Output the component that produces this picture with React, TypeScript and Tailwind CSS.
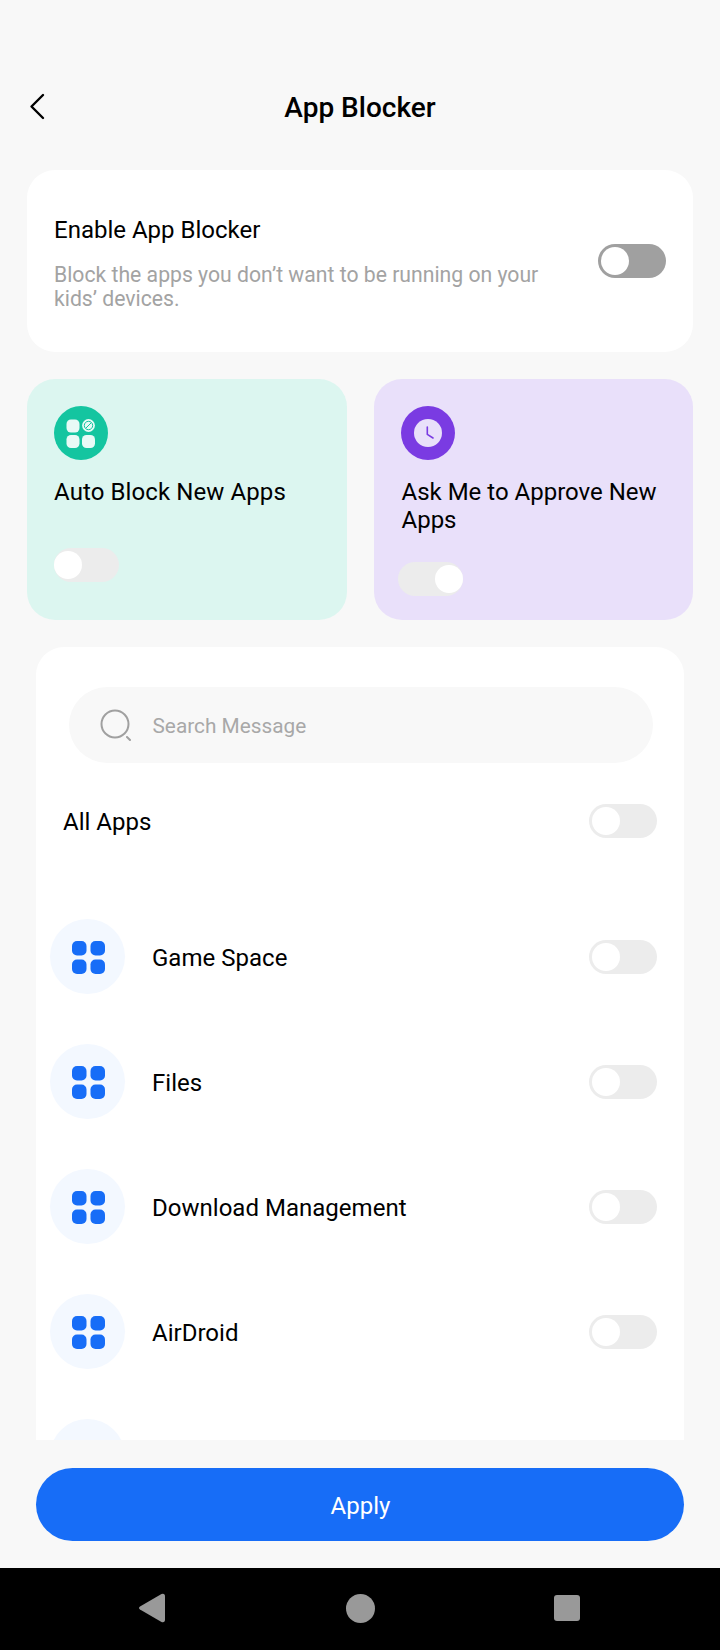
const apps = ["Game Space", "Files", "Download Management", "AirDroid", ""];

function Toggle({ on = false, dark = false, small = false }: { on?: boolean; dark?: boolean; small?: boolean }) {
  return (
    <div
      className={`flex h-[34px] shrink-0 items-center rounded-full ${small ? "w-[65px] px-0" : "w-[68px] px-[3px]"} ${
        dark ? "bg-[#a0a0a0]" : "bg-[#ececec]"
      } ${on ? "justify-end" : "justify-start"}`}
    >
      <div className="size-[28px] rounded-full bg-white" />
    </div>
  );
}

function GridIcon() {
  return (
    <svg className="ml-[2px] mt-[1px]" width="33" height="33" viewBox="0 0 33 33" fill="#176df7">
      <rect x="0" y="0" width="14.5" height="14.5" rx="5" />
      <rect x="18.5" y="0" width="14.5" height="14.5" rx="5" />
      <rect x="0" y="18.5" width="14.5" height="14.5" rx="5" />
      <rect x="18.5" y="18.5" width="14.5" height="14.5" rx="5" />
    </svg>
  );
}

function AppRow({ name }: { name: string }) {
  return (
    <div className="flex h-[75px] shrink-0 items-center pl-[14px] pr-[27px]">
      <div className="flex size-[75px] items-center justify-center rounded-full bg-[#f3f8ff]">
        <GridIcon />
      </div>
      <span className="ml-[27px] mt-[2px] flex-1 text-[24px] tracking-[0.02px] text-black">{name}</span>
      <Toggle />
    </div>
  );
}

export default function App() {
  return (
    <div className="flex h-[1650px] w-[720px] flex-col overflow-hidden bg-[#f8f8f8] font-['Roboto',sans-serif]">
      {/* header */}
      <div className="relative mt-[86px] flex h-[42px] shrink-0 items-center justify-center">
        <svg className="absolute left-[28px] top-[7px]" width="18" height="28" viewBox="0 0 18 28" fill="none" stroke="#000" strokeWidth="2.4" strokeLinecap="round" strokeLinejoin="round">
          <path d="M15 2 L3.5 13.5 L15 25" />
        </svg>
        <h1 className="mt-[2px] text-[28px] font-medium text-black">App Blocker</h1>
      </div>

      {/* enable card */}
      <div className="mx-[27px] mt-[42px] flex h-[182px] shrink-0 items-center rounded-[28px] bg-white pl-[27px] pr-[27px]">
        <div className="mt-[2px] flex-1">
          <div className="text-[24px] leading-[32px] text-black">Enable App Blocker</div>
          <p className="mt-[17px] w-[510px] text-[21.2px] leading-[24px] text-[#a3a3a3]">
            Block the apps you don’t want to be running on your kids’ devices.
          </p>
        </div>
        <Toggle dark />
      </div>

      {/* two option cards */}
      <div className="mx-[27px] mt-[27px] grid h-[241px] shrink-0 grid-cols-2 gap-[27px]">
        <div className="rounded-[28px] bg-[#dcf6f0] pl-[27px] pr-[20px] pt-[27px]">
          <div className="flex size-[54px] items-center justify-center rounded-full bg-[#14c5a0]">
            <svg width="30" height="30" viewBox="0 0 30 30">
              <rect x="0.5" y="1.5" width="13" height="13" rx="4.5" fill="#e8faf6" />
              <rect x="0.5" y="17" width="13" height="13" rx="4.5" fill="#e8faf6" />
              <rect x="16" y="17" width="13" height="13" rx="4.5" fill="#e8faf6" />
              <circle cx="22.5" cy="7.5" r="6.4" fill="#e8faf6" />
              <circle cx="22.5" cy="7.5" r="4.2" fill="none" stroke="#14c5a0" strokeWidth="1" />
              <path d="M19.8 10.2 L25.2 4.8" stroke="#14c5a0" strokeWidth="1" />
            </svg>
          </div>
          <div className="mt-[18px] text-[24px] leading-[29px] tracking-[0.1px] text-black">Auto Block New Apps</div>
          <div className="mt-[41px]">
            <Toggle small />
          </div>
        </div>
        <div className="rounded-[28px] bg-[#e9e0fa] pl-[27px] pr-[20px] pt-[27px]">
          <div className="flex size-[54px] items-center justify-center rounded-full bg-[#7a3be2]">
            <svg width="30" height="30" viewBox="0 0 30 30">
              <circle cx="15" cy="15" r="14" fill="#e9e0fa" />
              <path d="M14.3 9 V16.3 L20 20" fill="none" stroke="#7a3be2" strokeWidth="1.6" strokeLinecap="round" strokeLinejoin="round" />
            </svg>
          </div>
          <div className="ml-px mt-[18px] text-[24px] leading-[28px] text-black">Ask Me to Approve New Apps</div>
          <div className="-ml-[3px] mt-[28px]">
            <Toggle on small />
          </div>
        </div>
      </div>

      {/* app list, cut off by the footer */}
      <div className="mx-[36px] mt-[27px] flex h-[793px] shrink-0 flex-col overflow-hidden rounded-t-[28px] bg-white">
        <div className="ml-[32.5px] mr-[31.5px] mt-[40px] flex h-[76px] shrink-0 items-center rounded-full bg-[#f8f8f8] pl-[31px]">
          <svg width="32" height="32" viewBox="0 0 32 32" fill="none" stroke="#a0a0a0" strokeWidth="2">
            <circle cx="15" cy="15" r="13.5" />
            <path d="M27 28 L30 31" strokeLinecap="round" />
          </svg>
          <span className="ml-[21px] mt-[4px] text-[20.8px] text-[#a8a8a8]">Search Message</span>
        </div>
        <div className="mt-[40px] flex h-[35px] shrink-0 items-center justify-between pl-[27px] pr-[27px]">
          <span className="mt-[2px] text-[24px] text-black">All Apps</span>
          <Toggle />
        </div>
        <div className="mt-[81px] flex flex-col gap-[50px]">
          {apps.map((name, i) => (
            <AppRow key={i} name={name} />
          ))}
        </div>
      </div>

      {/* apply */}
      <div className="mx-[36px] mt-[28px] flex h-[73px] shrink-0 items-center justify-center rounded-full bg-[#176df7] pl-px pt-[2px] text-[24px] text-white">
        Apply
      </div>

      {/* android nav bar */}
      <div className="mt-[27px] flex h-[82px] shrink-0 items-center bg-black pb-[2px]">
        <svg className="ml-[138px]" width="28" height="30" viewBox="0 0 28 30" fill="#999">
          <path d="M2 13.5 L23.5 1 Q27 0 27 3.5 V26.5 Q27 30 23.5 29 L2 16.5 Q0 15 2 13.5 Z" />
        </svg>
        <div className="ml-[180px] size-[29px] rounded-full bg-[#999]" />
        <div className="ml-[179px] size-[26px] rounded-[3px] bg-[#999]" />
      </div>
    </div>
  );
}
